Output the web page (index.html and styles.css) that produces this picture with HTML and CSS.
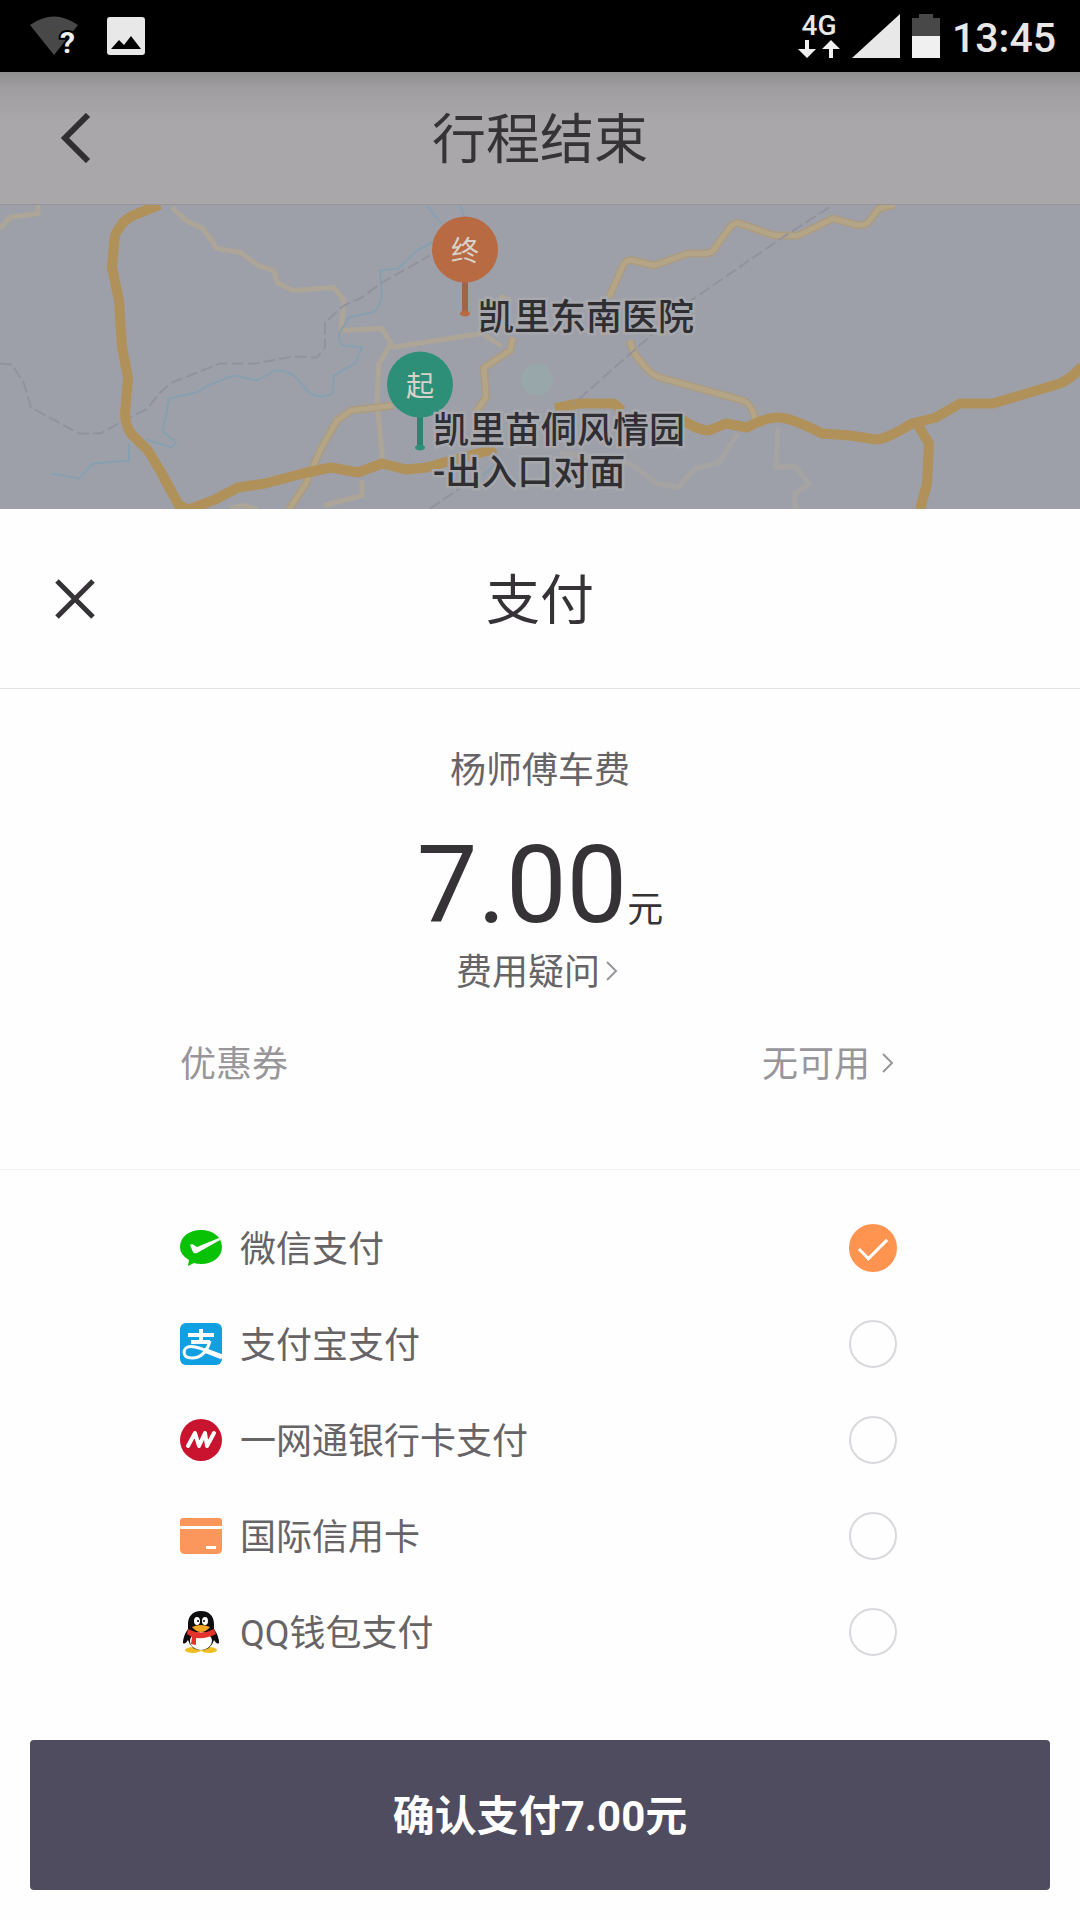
FILE: index.html
```html
<!DOCTYPE html>
<html lang="zh-CN">
<head>
  <meta charset="UTF-8" />
  <title>支付</title>
  <meta name="viewport" content="width=device-width, initial-scale=1.0" />
  <link rel="stylesheet" href="styles.css">
</head>
<body>

  <!-- status bar -->
  <div class="status-bar">
    <div class="status-left">
      <svg width="52" height="40" viewBox="0 0 52 40">
        <path d="M1 9Q25-8 49 9L25 39Z" fill="#484848" />
        <text x="31" y="37" class="wifi-mark">?</text>
      </svg>
      <svg width="38" height="38" viewBox="0 0 38 38">
        <rect width="38" height="38" rx="3" fill="#e8e8e8" />
        <path d="M4 32L12 23L17 28L24 19L34 32Z" fill="#000" />
      </svg>
    </div>
    <div class="status-right">
      <div class="network">
        <span>4G</span>
        <svg width="42" height="18" viewBox="0 0 42 18" fill="#f0f0f0">
          <path d="M7 0H11V9H18L9 18L0 9H7Z" />
          <path d="M31 18H35V9H42L33 0L24 9H31Z" />
        </svg>
      </div>
      <svg width="48" height="44" viewBox="0 0 48 44">
        <path d="M48 0V44H0Z" fill="#e8e8e8" />
      </svg>
      <svg width="28" height="44" viewBox="0 0 28 44">
        <path d="M0 4H7V0H21V4H28V22H0Z" fill="#484848" />
        <path d="M0 22H28V44H0Z" fill="#f0f0f0" />
      </svg>
      <span class="clock">13:45</span>
    </div>
  </div>

  <!-- trip page, dimmed behind the sheet -->
  <header class="bar trip-bar">
    <button class="icon-button" type="button" aria-label="返回">
      <svg width="42" height="50" viewBox="0 0 42 50" fill="none" stroke="#302e31" stroke-width="6">
        <path d="M34 2L11 25L34 48" />
      </svg>
    </button>
    <h1>行程结束</h1>
  </header>

  <svg class="map" viewBox="0 0 1080 305" preserveAspectRatio="xMidYMid slice">
    <circle class="park" cx="537" cy="175" r="16" />

    <path class="lane" d="M0 24L10 13L38 9V0" />
    <path class="lane" d="M172 3L186 16L203 24L217 44L241 48L258 61L274 66L277 78L293 86L334 83L344 96L341 126L382 124L391 139L379 159L377 196L382 249V262" />
    <path class="lane" d="M391 143L482 129L502 142M499 92L512 96" />
    <path class="lane" d="M362 276V291L324 301M230 304L243 301L258 305" />
    <path class="lane faint" d="M738 229L719 258L695 264L678 283L657 279L630 259L560 248" />
    <path class="lane faint" d="M778 223L776 263L795 262L809 279L795 289V305" />

    <path class="river" d="M427 1L441 19M460 0L464 12M432 38L417 46L398 64L380 66L382 89Q381 104 372 108L349 113L339 129Q338 139 344 141L362 143L355 159L334 171L332 189Q322 195 310 189L296 173Q288 165 275 166L257 176L234 171Q215 177 196 188L169 194L165 216L162 226L176 238L172 243L146 235" />
    <path class="river" d="M129 239V256L93 259L79 274L52 269" />
    <path class="river" d="M483 271L495 260" />

    <path class="rail" d="M0 159L12 160L24 179L31 203L55 216L79 229H100L124 216L148 204Q158 188 172 178L220 159H255L293 152L317 153L325 143V118L344 101L362 93L382 78L430 51" />
    <path class="rail" d="M430 304L482 269" />

    <path class="road-edge" d="M393 201L351 206L337 216L320 246L306 279L289 305" />
    <path class="road" d="M393 201L351 206L337 216L320 246L306 279L289 305" />
    <path class="road-edge" d="M513 133L510 146L484 163L486 193L475 209" />
    <path class="road" d="M513 133L510 146L484 163L486 193L475 209" />
    <path class="road-edge" d="M895 0L879 4L868 18Q864 22 855 20L833 14L798 31H774L740 19Q733 18 729 24L714 45Q711 49 705 49H688L654 61L633 56Q626 55 623 61L609 93M630 136Q632 148 640 156Q650 170 660 173L743 196Q752 200 755 214" />
    <path class="road" d="M895 0L879 4L868 18Q864 22 855 20L833 14L798 31H774L740 19Q733 18 729 24L714 45Q711 49 705 49H688L654 61L633 56Q626 55 623 61L609 93M630 136Q632 148 640 156Q650 170 660 173L743 196Q752 200 755 214" />

    <path class="highway" d="M160 0L138 9Q125 14 121 21Q114 29 114 39L112 63L119 96L122 143L128 173L125 209Q125 220 131 229L148 246L160 266L179 301L189 305L213 296L238 283L265 279L303 269L331 263L358 268L382 259L406 265L427 263L451 256L496 244M555 204L578 199H614L622 206M680 214Q698 226 709 226L726 219L747 223Q765 213 778 213T822 229L850 231L876 235Q886 235 912 219L936 213L960 199H993L1060 179Q1070 175 1082 162M917 219L929 239L927 279L920 305" />
    <path class="rail" d="M829 3L781 34L691 96L626 153L574 199" />

    <g class="pin pin-end">
      <path d="M465 75V109" />
      <ellipse cx="465" cy="109" rx="5" ry="3" />
      <circle cx="465" cy="45" r="33" />
      <text x="465" y="56">终</text>
    </g>
    <g class="pin pin-start">
      <path d="M420 210V243" />
      <ellipse cx="420" cy="243" rx="5" ry="3" />
      <circle cx="420" cy="180" r="33" />
      <text x="420" y="191">起</text>
    </g>
    <text class="place" x="478" y="125">凯里东南医院</text>
    <text class="place" x="433" y="238">凯里苗侗风情园</text>
    <text class="place" x="433" y="280">-出入口对面</text>
  </svg>

  <!-- payment sheet -->
  <main class="sheet">
    <div class="bar sheet-bar">
      <button class="icon-button" type="button" aria-label="关闭">
        <svg width="42" height="42" viewBox="0 0 42 42" stroke="#353336" stroke-width="5">
          <path d="M3 3L39 39M39 3L3 39" />
        </svg>
      </button>
      <h2>支付</h2>
    </div>

    <section class="fee">
      <p class="driver">杨师傅车费</p>
      <p class="amount">7.00<span>元</span></p>
      <a class="question" href="#">费用疑问<svg class="arrow" width="12" height="20" viewBox="0 0 12 20"><path d="M1 1L10 10L1 19" /></svg></a>
      <a class="coupon" href="#">
        <span>优惠券</span>
        <span class="coupon-value">无可用<svg class="arrow" width="12" height="20" viewBox="0 0 12 20"><path d="M1 1L10 10L1 19" /></svg></span>
      </a>
    </section>

    <form>
      <div class="methods">
        <label class="method">
          <svg width="42" height="42" viewBox="0 0 42 42">
            <path d="M21 3C33 3 42 10 42 20S33 37 21 37Q17 37 14 36L8 39L9 33Q0 28 0 20C0 10 9 3 21 3Z" fill="#09c205" />
            <path d="M10 18L12 17L17 20L39 11L40 13L17 26Q14 27 13 25Z" fill="#fff" />
          </svg>
          <span>微信支付</span>
          <input type="radio" name="method" value="wechat" checked />
        </label>

        <label class="method">
          <svg width="42" height="42" viewBox="0 0 42 42" fill="none" stroke="#fff">
            <rect width="42" height="42" rx="6" fill="#109fe0" stroke="none" />
            <path d="M8 12H34M21 6V18M11 19H30" stroke-width="4" />
            <path d="M30 18Q25 35 12 35Q4 35 4 29Q5 22 15 24Q24 26 42 34" stroke-width="3" />
            <path d="M24 27L42 34" stroke-width="5" />
          </svg>
          <span>支付宝支付</span>
          <input type="radio" name="method" value="alipay" />
        </label>

        <label class="method">
          <svg width="42" height="42" viewBox="0 0 42 42" fill="none">
            <circle cx="21" cy="21" r="21" fill="#c8142f" />
            <path d="M8 27L15 14L19 27L25 14L27 27L34 14" stroke="#fff" stroke-width="4" stroke-linejoin="round" stroke-linecap="round" />
          </svg>
          <span>一网通银行卡支付</span>
          <input type="radio" name="method" value="cmb" />
        </label>

        <label class="method">
          <svg width="42" height="42" viewBox="0 0 42 42">
            <path d="M0 11V6Q0 3 3 3H39Q42 3 42 6V11Z" fill="#fb965d" />
            <path d="M0 14H42V34Q42 39 37 39H5Q0 39 0 34Z" fill="#fb965d" />
            <rect x="26" y="31" width="10" height="3" fill="#fff" />
          </svg>
          <span>国际信用卡</span>
          <input type="radio" name="method" value="credit" />
        </label>

        <label class="method">
          <svg width="42" height="42" viewBox="0 0 42 42">
            <ellipse cx="13" cy="39" rx="8" ry="3" fill="#f0bd20" />
            <ellipse cx="29" cy="39" rx="8" ry="3" fill="#f0bd20" />
            <path d="M21 0C12 0 8 6 8 13V18Q3 25 3 32Q5 34 8 29Q11 39 21 39T34 29Q37 34 39 32Q39 25 34 18V13C34 6 30 0 21 0Z" fill="#0d0d0f" />
            <ellipse cx="21" cy="30" rx="11" ry="9" fill="#fff" />
            <ellipse cx="17" cy="10" rx="3" ry="4" fill="#fff" />
            <ellipse cx="25" cy="10" rx="3" ry="4" fill="#fff" />
            <circle cx="18" cy="10" r="1" />
            <circle cx="24" cy="10" r="1" />
            <path d="M8 18Q21 25 34 18L36 23Q27 28 16 27V34L11 33L12 26L7 23Z" fill="#e5332c" />
            <path d="M12 16Q21 12 30 16Q26 21 21 21T12 16Z" fill="#f5a623" />
          </svg>
          <span>QQ钱包支付</span>
          <input type="radio" name="method" value="qq" />
        </label>
      </div>

      <div class="submit">
        <button class="pay-button" type="submit">确认支付7.00元</button>
      </div>
    </form>
  </main>

</body>
</html>
```
FILE: styles.css
```css
* {
  box-sizing: border-box;
}

body {
  margin: 0;
  font-family: Roboto, "Noto Sans CJK SC", sans-serif;
  font-size: 36px;
  line-height: 48px;
  color: #666467;
  background-color: #fefefe;
}

h1, h2, p {
  margin: 0;
}

h1, h2 {
  padding-top: 6px;
  font-size: 54px;
  line-height: 72px;
  font-weight: 400;
  color: #353336;
}

a {
  color: inherit;
  text-decoration: none;
}

svg {
  display: block;
  flex: none;
}

/* status bar */
.status-bar {
  display: flex;
  justify-content: space-between;
  align-items: center;
  height: 72px;
  padding: 0 24px 0 29px;
  background-color: #000;
}

.status-left {
  display: flex;
  align-items: center;
  gap: 26px;
}

.status-left svg {
  overflow: visible;
}

.wifi-mark {
  font-size: 30px;
  font-weight: 700;
  fill: #f0f0f0;
  stroke: #000;
  stroke-width: 4px;
  paint-order: stroke;
}

.status-right {
  display: flex;
  align-items: center;
  gap: 12px;
  color: #e8e8e8;
}

.network {
  display: flex;
  flex-direction: column;
  align-items: center;
  gap: 2px;
  font-size: 28px;
  font-weight: 500;
  line-height: 24px;
}

.clock {
  padding-top: 4px;
  font-size: 41px;
  font-weight: 500;
}

/* title bars */
.bar {
  display: grid;
  grid-template-columns: 150px 1fr 150px;
  align-items: center;
  text-align: center;
}

.trip-bar {
  height: 132px;
  background: linear-gradient(#8f8f8f, #9f9d9f 16px, #a9a7aa 48px);
}

.sheet-bar {
  height: 180px;
  border-bottom: 1px solid #e3e3e6;
}

.icon-button {
  display: flex;
  justify-content: center;
  padding: 24px 0;
  border: none;
  background: none;
  cursor: pointer;
}

/* map */
.map {
  width: 100%;
  height: 305px;
  background-color: #9ea0a9;
  border-top: 1px solid #98959b;
}

.map path {
  fill: none;
  stroke-linejoin: round;
}

.park {
  fill: #98a8aa;
}

.map .lane {
  stroke: #aca598;
  stroke-width: 5px;
}

.map .faint {
  stroke: #a5a4a2;
}

.map .river {
  stroke: #86a0b0;
  stroke-width: 2px;
}

.map .rail {
  stroke: #92929f;
  stroke-width: 2px;
  stroke-dasharray: 12 4;
}

.map .road-edge {
  stroke: #ab9b80;
  stroke-width: 8px;
}

.map .road {
  stroke: #b5a587;
  stroke-width: 5px;
}

.map .highway {
  stroke: #b0915a;
  stroke-width: 10px;
}

.map .pin path {
  stroke-width: 6px;
}

.pin text {
  font-size: 28px;
  text-anchor: middle;
  fill: #d8d2ca;
}

.pin-end {
  fill: #b86a42;
}

.map .pin-end path {
  stroke: #a26448;
}

.pin-start {
  fill: #2e8f79;
}

.map .pin-start path {
  stroke: #2e8270;
}

.place {
  font-size: 36px;
  font-weight: 500;
  fill: #2f2e33;
  stroke: #a7a8ad;
  stroke-width: 5px;
  paint-order: stroke;
}

/* fee */
.fee {
  display: flex;
  flex-direction: column;
  align-items: center;
  padding: 58px 180px 80px;
  border-bottom: 1px solid #f4f2f4;
}

.amount {
  margin-top: 36px;
  font-size: 108px;
  line-height: 108px;
  color: #353336;
}

.amount span {
  font-size: 36px;
  line-height: 48px;
}

.question {
  display: flex;
  align-items: center;
  gap: 6px;
  margin-top: 10px;
  padding-right: 6px;
}

.arrow {
  margin-bottom: 4px;
  fill: none;
  stroke: #98969a;
  stroke-width: 2px;
}

.coupon {
  display: flex;
  justify-content: space-between;
  align-self: stretch;
  margin-top: 44px;
  padding-right: 6px;
  color: #98969a;
}

.coupon-value {
  display: flex;
  align-items: center;
  gap: 12px;
}

/* payment methods */
.methods {
  padding: 30px 183px 0 180px;
}

.method {
  display: flex;
  align-items: center;
  gap: 18px;
  height: 96px;
  cursor: pointer;
}

.method span {
  padding-top: 4px;
}

.method input {
  appearance: none;
  display: grid;
  place-items: center;
  width: 48px;
  height: 48px;
  margin: 0 0 0 auto;
  border: 2px solid #dad8de;
  border-radius: 50%;
}

.method input:checked {
  border-color: #ff9350;
  background-color: #ff9350;
}

.method input:checked::after {
  content: "";
  width: 25px;
  height: 12px;
  margin-bottom: 6px;
  border: solid #fff;
  border-width: 0 0 3px 3px;
  transform: rotate(-45deg);
}

.submit {
  padding: 60px 30px 30px;
}

.pay-button {
  display: block;
  width: 100%;
  height: 150px;
  padding: 0 0 6px;
  border: none;
  border-radius: 4px;
  background-color: #4e4c5e;
  color: #fff;
  font-family: inherit;
  font-size: 42px;
  font-weight: 700;
  cursor: pointer;
}
```
